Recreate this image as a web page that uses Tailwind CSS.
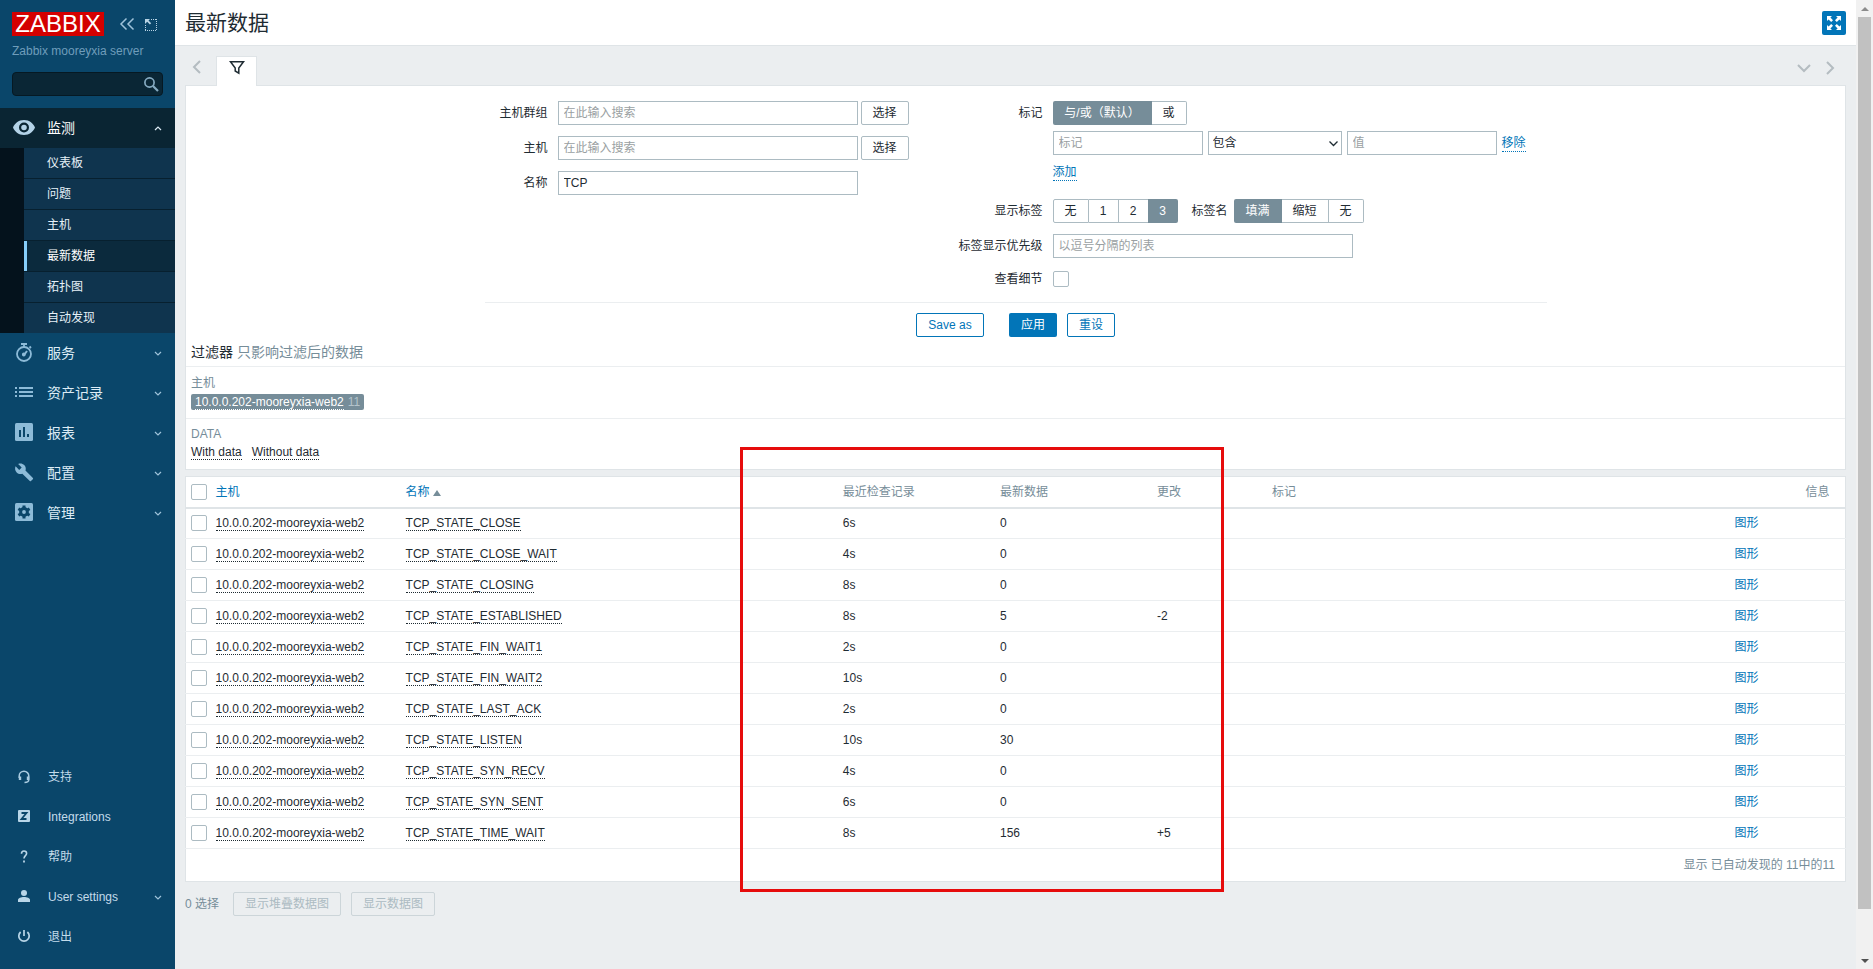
<!DOCTYPE html>
<html lang="zh-CN">
<head>
<meta charset="utf-8">
<title>最新数据</title>
<script src="https://cdn.jsdelivr.net/npm/@tailwindcss/browser@4"></script>
</head>
<body class="flex h-screen overflow-hidden bg-[#ebeef0] font-['Liberation_Sans','Noto_Sans_CJK_SC',sans-serif] text-xs text-[#1f2c33]">

<!-- Sidebar -->
<aside class="flex w-[175px] shrink-0 flex-col bg-[#0a466a] text-[#dcebf5]">
  <div class="px-3 pt-3">
    <div class="flex h-6 items-center">
      <a href="#" class="flex h-6 w-[92px] items-center justify-center bg-[#d40000] text-2xl leading-6 text-white">ZABBIX</a>
      <button aria-label="收起" class="ml-[15px]"><svg class="size-4" viewBox="0 0 16 16" fill="none" stroke="#9fc3da" stroke-width="1.500"><path d="M7.500 2.500 2 8l5.500 5.500M14.500 2.500 9 8l5.500 5.500"/></svg></button>
      <button aria-label="隐藏" class="ml-2"><svg class="size-[15px]" viewBox="0 0 15 15" fill="none" stroke="#b8d3e4"><path stroke-dasharray="1 1" d="M8 2.500H13.500M13.500 2V13.500M2 13.500H14M2.500 8V14"/><path fill="#b8d3e4" stroke="none" d="M2 2h5L5.500 3.500l2.700 2.700-1.300 1.300L4.200 4.800 2 7z"/></svg></button>
    </div>
    <div class="mt-[7px] h-4 leading-4 text-[#6f9dbb]">Zabbix mooreyxia server</div>
    <div class="mt-[13px] flex h-6 items-center rounded-sm border border-[#061923] bg-[#0a2635] pr-[3px]">
      <input type="search" aria-label="搜索" class="h-full min-w-0 flex-1 bg-transparent px-1 outline-none">
      <button aria-label="搜索"><svg class="size-4" viewBox="0 0 16 16" fill="none" stroke="#85aac1" stroke-width="1.700"><circle cx="6.500" cy="6.500" r="4.600"/><path d="M10 10l5 5" stroke-width="2.200"/></svg></button>
    </div>
  </div>

  <nav class="mt-3 text-sm">
    <a href="#" class="flex h-10 items-center bg-[#0a2533] pr-3 pl-3 text-white">
      <svg class="h-6 w-6" viewBox="0 0 24 24" fill="#b4d3e8"><path d="M12 4C6.500 4 2.500 7.600 1 11.500 2.500 15.400 6.500 19 12 19s9.500-3.600 11-7.500C21.500 7.600 17.500 4 12 4zm0 12.500a5 5 0 1 1 0-10 5 5 0 0 1 0 10zm0-2.200a2.800 2.800 0 1 0 0-5.600 2.800 2.800 0 0 0 0 5.600z"/></svg>
      <span class="ml-[11px] flex-1">监测</span>
      <svg class="mr-px size-2" viewBox="0 0 8 8" fill="none" stroke="#dcebf5" stroke-width="1.200"><path d="M1 6l3-3 3 3"/></svg>
    </a>
    <div class="bg-[#04121c] pl-6 text-xs">
      <ul class="bg-[#0f344e] text-[#e6f1f8]">
        <li class="h-[31px] border-b border-[#07202f]"><a href="#" class="block pl-[23px] leading-[30px]">仪表板</a></li>
        <li class="h-[31px] border-b border-[#07202f]"><a href="#" class="block pl-[23px] leading-[30px]">问题</a></li>
        <li class="h-[31px] border-b border-[#07202f]"><a href="#" class="block pl-[23px] leading-[30px]">主机</a></li>
        <li class="h-[31px] border-b border-[#07202f]"><a href="#" class="block border-l-3 border-[#86cdf9] bg-[#0b2a3d] pl-5 leading-[30px] text-white">最新数据</a></li>
        <li class="h-[31px] border-b border-[#07202f]"><a href="#" class="block pl-[23px] leading-[30px]">拓扑图</a></li>
        <li class="h-[30px]"><a href="#" class="block pl-[23px] leading-[30px]">自动发现</a></li>
      </ul>
    </div>
    <a href="#" class="flex h-10 items-center px-3">
      <svg class="h-6 w-6" viewBox="0 0 24 24" fill="none" stroke="#8dbbd8" stroke-width="1.800"><circle cx="12" cy="13" r="7"/><path d="M9 3h6M12 3.500v2.500M17.500 5.500l1.500 1.500"/><path d="M12 14l3-4" stroke-width="2"/><circle cx="11.800" cy="13.500" r="1" fill="#8dbbd8"/></svg>
      <span class="ml-[11px] flex-1">服务</span>
      <svg class="mr-px size-2" viewBox="0 0 8 8" fill="none" stroke="#9fc3da" stroke-width="1.200"><path d="M1 3l3 3 3-3"/></svg>
    </a>
    <a href="#" class="flex h-10 items-center px-3">
      <svg class="h-6 w-6" viewBox="0 0 24 24" fill="#8dbbd8"><path d="M3 6h2v2H3zM3 10h2v2H3zM3 14h2v2H3zM7 6h14v2H7zM7 10h14v2H7zM7 14h14v2H7z"/></svg>
      <span class="ml-[11px] flex-1">资产记录</span>
      <svg class="mr-px size-2" viewBox="0 0 8 8" fill="none" stroke="#9fc3da" stroke-width="1.200"><path d="M1 3l3 3 3-3"/></svg>
    </a>
    <a href="#" class="flex h-10 items-center px-3">
      <svg class="h-6 w-6" viewBox="0 0 24 24"><rect x="3" y="2" width="18" height="18" rx="1.500" fill="#8dbbd8"/><path d="M8 9v7M12 6v10M16 13v3" stroke="#0a466a" stroke-width="2"/></svg>
      <span class="ml-[11px] flex-1">报表</span>
      <svg class="mr-px size-2" viewBox="0 0 8 8" fill="none" stroke="#9fc3da" stroke-width="1.200"><path d="M1 3l3 3 3-3"/></svg>
    </a>
    <a href="#" class="flex h-10 items-center px-3">
      <svg class="h-6 w-6" viewBox="0 0 24 24" fill="#8dbbd8"><path transform="translate(2.300 1.500) scale(.82)" d="M22.700 19l-9.100-9.100c.9-2.300.4-5-1.500-6.900-2-2-5-2.400-7.400-1.300L9 6 6 9 1.600 4.700C.4 7.100.9 10.100 2.900 12.100c1.900 1.900 4.600 2.400 6.900 1.500l9.100 9.100c.4.4 1 .4 1.400 0l2.300-2.300c.5-.4.5-1.100.1-1.400z"/></svg>
      <span class="ml-[11px] flex-1">配置</span>
      <svg class="mr-px size-2" viewBox="0 0 8 8" fill="none" stroke="#9fc3da" stroke-width="1.200"><path d="M1 3l3 3 3-3"/></svg>
    </a>
    <a href="#" class="flex h-10 items-center px-3">
      <svg class="h-6 w-6" viewBox="0 0 24 24"><rect x="3" y="2" width="18" height="18" rx="1.500" fill="#8dbbd8"/><g transform="translate(0 -1)"><circle cx="12" cy="12" r="3.400" fill="none" stroke="#0a466a" stroke-width="3"/><path d="M12 5.500v2.500M12 16v2.500M6.400 8.700l2.200 1.300M15.400 14l2.200 1.300M6.400 15.300 8.600 14M15.400 10l2.200-1.300" stroke="#0a466a" stroke-width="3"/></g></svg>
      <span class="ml-[11px] flex-1">管理</span>
      <svg class="mr-px size-2" viewBox="0 0 8 8" fill="none" stroke="#9fc3da" stroke-width="1.200"><path d="M1 3l3 3 3-3"/></svg>
    </a>
  </nav>

  <nav class="mt-auto pb-3 text-[#c3dbea]">
    <a href="#" class="flex h-10 items-center px-3">
      <svg class="ml-1 size-4" viewBox="0 0 16 16" fill="none" stroke="#a9cbe0" stroke-width="1.500"><path d="M3.200 9V7a4.800 4.800 0 0 1 9.600 0v3.500c0 1.800-1.500 3-4.300 3"/><path d="M4 7.500v3.500M12 7.500v3.500" stroke-width="2.400"/></svg>
      <span class="ml-4">支持</span>
    </a>
    <a href="#" class="flex h-10 items-center px-3">
      <svg class="ml-1 size-4" viewBox="0 0 16 16"><rect x="2" y="1" width="12" height="12" rx="1" fill="#b9d6e8"/><path d="M5.500 4h5l-5 6h5" fill="none" stroke="#0a466a" stroke-width="1.800"/></svg>
      <span class="ml-4">Integrations</span>
    </a>
    <a href="#" class="flex h-10 items-center px-3">
      <svg class="ml-1 size-4" viewBox="0 0 16 16" fill="none" stroke="#b9d6e8" stroke-width="1.600"><path d="M5.500 4.700C5.500 2.800 6.500 2 8 2s2.600.9 2.600 2.400C10.600 6.500 8 6.800 8 9.500"/><path d="M8 11.500v2" stroke-width="1.800"/></svg>
      <span class="ml-4">帮助</span>
    </a>
    <a href="#" class="flex h-10 items-center px-3">
      <svg class="ml-1 size-4" viewBox="0 0 16 16" fill="#b9d6e8"><circle cx="8" cy="4" r="3"/><path d="M2 13v-2c0-2 3-3 6-3s6 1 6 3v2z"/></svg>
      <span class="ml-4 flex-1">User settings</span>
      <svg class="mr-px size-2" viewBox="0 0 8 8" fill="none" stroke="#9fc3da" stroke-width="1.200"><path d="M1 3l3 3 3-3"/></svg>
    </a>
    <a href="#" class="flex h-10 items-center px-3">
      <svg class="ml-1 size-4" viewBox="0 0 16 16" fill="none" stroke="#b9d6e8" stroke-width="1.700"><path d="M4.600 3a5.200 5.200 0 1 0 6.800 0M8 1v6"/></svg>
      <span class="ml-4">退出</span>
    </a>
  </nav>
</aside>

<!-- Page -->
<div class="relative min-w-0 flex-1">
  <header class="flex h-[46px] items-center justify-between border-b border-[#dfe4e7] bg-white px-[10px]">
    <h1 class="text-[21px] leading-6">最新数据</h1>
    <button aria-label="全屏" class="flex size-6 items-center justify-center rounded-xs bg-[#0275b8]">
      <svg class="size-4" viewBox="0 0 16 16" fill="#fff"><path d="M1 1h5L4.400 2.600 7 5.200 5.200 7 2.600 4.400 1 6z"/><path d="M15 1v5l-1.600-1.600L10.800 7 9 5.200l2.600-2.600L10 1zM1 15v-5l1.600 1.600L5.200 9 7 10.800l-2.600 2.600L6 15zM15 15h-5l1.600-1.600L9 10.800 10.800 9l2.600 2.600L15 10z"/></svg>
    </button>
  </header>

  <main class="px-[10px] pt-[10px]">
    <div class="flex h-[29px] items-start pr-2">
      <button aria-label="上一个" class="mt-1 ml-[5px] w-[26px]"><svg class="size-[14px]" viewBox="0 0 14 14" fill="none" stroke="#b4bcc1" stroke-width="2"><path d="M10 1 4 7l6 6"/></svg></button>
      <button aria-label="过滤器" class="relative z-10 flex h-[30px] w-[41px] items-start justify-center border border-b-0 border-[#dfe4e7] bg-white pt-[3px]"><svg class="size-4" viewBox="0 0 16 16" fill="none" stroke="#1f2c33" stroke-width="1.500"><path d="M1.500 1.800h13L9.800 8v5.200L6.200 11V8z"/></svg></button>
      <button aria-label="展开" class="mt-[5px] ml-auto"><svg class="size-[14px]" viewBox="0 0 14 14" fill="none" stroke="#b4bcc1" stroke-width="2"><path d="M1 4l6 6 6-6"/></svg></button>
      <button aria-label="下一个" class="mt-[5px] ml-[13px]"><svg class="size-[14px]" viewBox="0 0 14 14" fill="none" stroke="#b4bcc1" stroke-width="2"><path d="M3 1l6 6-6 6"/></svg></button>
    </div>

    <section class="border border-[#dfe4e7] bg-white">
      <form class="mx-auto max-w-[1062px] pt-[15px]" onsubmit="return false">
        <div class="flex">
          <div class="flex w-[473px] flex-col gap-[11px]">
            <div class="flex h-6 items-center">
              <label for="groups" class="w-[63px] text-right">主机群组</label>
              <input id="groups" placeholder="在此输入搜索" class="ml-[10px] h-6 w-[300px] border border-[#acbbc2] px-[5px] placeholder:text-[#9a9fa2]">
              <button class="ml-[3px] h-6 w-12 rounded-xs border border-[#acbbc2]">选择</button>
            </div>
            <div class="flex h-6 items-center">
              <label for="hosts" class="w-[63px] text-right">主机</label>
              <input id="hosts" placeholder="在此输入搜索" class="ml-[10px] h-6 w-[300px] border border-[#acbbc2] px-[5px] placeholder:text-[#9a9fa2]">
              <button class="ml-[3px] h-6 w-12 rounded-xs border border-[#acbbc2]">选择</button>
            </div>
            <div class="flex h-6 items-center">
              <label for="name" class="w-[63px] text-right">名称</label>
              <input id="name" value="TCP" class="ml-[10px] h-6 w-[300px] border border-[#acbbc2] px-[5px]">
            </div>
          </div>

          <div class="grid flex-1 grid-cols-[85px_1fr] gap-x-[10px]">
            <span class="text-right leading-6">标记</span>
            <div>
              <div class="flex h-6">
                <button class="w-[99px] rounded-l-xs bg-[#768d99] text-white">与/或（默认）</button>
                <button class="w-[35px] rounded-r-xs border border-l-0 border-[#acbbc2]">或</button>
              </div>
              <div class="mt-[6px] flex h-6 items-center gap-[5px]">
                <input aria-label="标记" placeholder="标记" class="h-6 w-[150px] border border-[#acbbc2] px-[5px] placeholder:text-[#9a9fa2]">
                <div class="relative">
                  <select aria-label="运算符" class="block h-6 w-[134px] appearance-none border border-[#acbbc2] bg-white px-1"><option>包含</option></select>
                  <svg class="pointer-events-none absolute top-2 right-1 size-[9px]" viewBox="0 0 9 9" fill="none" stroke="#1f2c33" stroke-width="1.300"><path d="M.5 2.500l4 4 4-4"/></svg>
                </div>
                <input aria-label="值" placeholder="值" class="h-6 w-[150px] border border-[#acbbc2] px-[5px] placeholder:text-[#9a9fa2]">
                <a href="#" class="border-b border-dotted border-[#0275b8] leading-4 text-[#0275b8]">移除</a>
              </div>
              <div class="mt-[9px] h-4"><a href="#" class="inline-block border-b border-dotted border-[#0275b8] leading-4 text-[#0275b8]">添加</a></div>
            </div>

            <span class="mt-[19px] text-right leading-6">显示标签</span>
            <div class="mt-[19px] flex h-6 items-center">
              <div class="flex h-6">
                <button class="w-9 rounded-l-xs border border-[#acbbc2]">无</button>
                <button class="w-[30px] border border-l-0 border-[#acbbc2]">1</button>
                <button class="w-[29px] border-y border-[#acbbc2]">2</button>
                <button class="w-[30px] rounded-r-xs bg-[#768d99] text-white">3</button>
              </div>
              <span class="ml-[14px]">标签名</span>
              <div class="ml-[6px] flex h-6">
                <button class="w-12 rounded-l-xs bg-[#768d99] text-white">填满</button>
                <button class="w-[47px] border border-l-0 border-[#acbbc2]">缩短</button>
                <button class="w-[35px] rounded-r-xs border border-l-0 border-[#acbbc2]">无</button>
              </div>
            </div>

            <label for="prio" class="mt-[11px] text-right leading-6">标签显示优先级</label>
            <input id="prio" placeholder="以逗号分隔的列表" class="mt-[11px] h-6 w-[300px] border border-[#acbbc2] px-[5px] placeholder:text-[#9a9fa2]">

            <label for="details" class="mt-[9px] text-right leading-6">查看细节</label>
            <input id="details" type="checkbox" class="mt-[13px] size-4 appearance-none rounded-xs border border-[#acbbc2] bg-white">
          </div>
        </div>
        <div class="mt-[11px] flex justify-center border-t border-[#ebeef0] pt-[10px]">
          <button class="h-6 w-[68px] rounded-xs border border-[#0275b8] text-[#0275b8]">Save as</button>
          <button class="ml-[25px] h-6 w-12 rounded-xs bg-[#0275b8] text-white">应用</button>
          <button class="ml-[10px] h-6 w-12 rounded-xs border border-[#0275b8] text-[#0275b8]">重设</button>
        </div>
      </form>

      <h4 class="mt-[5px] border-b border-[#ebeef0] px-[5px] pb-1 text-sm leading-5">过滤器 <span class="text-[#768d99]">只影响过滤后的数据</span></h4>
      <div class="border-b border-[#ebeef0] px-[5px] pt-2 pb-2">
        <h3 class="leading-4 text-[#768d99]">主机</h3>
        <div class="mt-[3px] inline-flex h-4 items-center gap-1 rounded-xs bg-[#768d99] px-1 align-top leading-[14px] text-white"><a href="#" class="border-b border-dotted border-white">10.0.0.202-mooreyxia-web2</a><span class="text-[#b4c3cb]">11</span></div>
      </div>
      <div class="px-[5px] pt-[7px] pb-[9px]">
        <h3 class="leading-4 text-[#768d99]">DATA</h3>
        <div class="mt-[3px] flex gap-[10px] leading-[14px]"><a href="#" class="border-b border-dotted border-[#1f2c33]">With data</a><a href="#" class="border-b border-dotted border-[#1f2c33]">Without data</a></div>
      </div>
    </section>

    <form class="mt-[6px]" onsubmit="return false">
      <table class="w-full table-fixed border border-[#dfe4e7] bg-white text-left leading-[14px]">
        <colgroup><col class="w-[25px]"><col class="w-[190px]"><col class="w-[437px]"><col class="w-[157px]"><col class="w-[157px]"><col class="w-[115px]"><col class="w-[462px]"><col class="w-[71px]"><col class="w-[45px]"></colgroup>
        <thead>
          <tr class="h-[31px] border-b-2 border-[#dfe4e7] text-[#768d99] [&>th]:pl-[5px] [&>th]:font-normal">
            <th><input type="checkbox" aria-label="全选" class="block size-4 appearance-none rounded-xs border border-[#acbbc2] bg-white"></th>
            <th><a href="#" class="text-[#0275b8]">主机</a></th>
            <th><a href="#" class="text-[#0275b8]">名称 <span class="inline-block border-x-4 border-b-6 border-x-transparent border-b-[#768d99]"></span></a></th>
            <th>最近检查记录</th><th>最新数据</th><th>更改</th><th>标记</th><th></th><th>信息</th>
          </tr>
        </thead>
        <tbody id="rows"></tbody>
        <tfoot><tr class="h-[33px] text-[#768d99]"><td colspan="9" class="pr-[10px] text-right">显示 已自动发现的 11中的11</td></tr></tfoot>
      </table>
      <div class="mt-[10px] flex h-6 items-center text-[#768d99]">
        <span>0 选择</span>
        <button disabled class="ml-[14px] h-6 rounded-xs border border-[#ccd5d9] px-[11px] text-[#acbbc2]">显示堆叠数据图</button>
        <button disabled class="ml-[10px] h-6 rounded-xs border border-[#ccd5d9] px-[11px] text-[#acbbc2]">显示数据图</button>
      </div>
    </form>
  </main>

  <!-- Highlight frame over the value columns -->
  <div class="pointer-events-none absolute top-[447px] left-[565px] h-[445px] w-[484px] border-3 border-[#e60c0c]"></div>
</div>

<!-- Scrollbar -->
<div class="flex w-[17px] shrink-0 flex-col items-center bg-[#f1f1f1]" aria-hidden="true">
  <div class="flex h-[17px] items-center"><svg class="h-1 w-2" viewBox="0 0 8 4" fill="#8b8b8b"><path d="M0 4l4-4 4 4z"/></svg></div>
  <div class="w-[13px] grow-[892] bg-[#c1c1c1]"></div>
  <div class="grow-[43]"></div>
  <div class="flex h-[17px] items-center"><svg class="h-1 w-2" viewBox="0 0 8 4" fill="#505050"><path d="M0 0l4 4 4-4z"/></svg></div>
</div>

<script>
const items = [
  ['CLOSE', '6s', '0', ''], ['CLOSE_WAIT', '4s', '0', ''], ['CLOSING', '8s', '0', ''],
  ['ESTABLISHED', '8s', '5', '-2'], ['FIN_WAIT1', '2s', '0', ''], ['FIN_WAIT2', '10s', '0', ''],
  ['LAST_ACK', '2s', '0', ''], ['LISTEN', '10s', '30', ''], ['SYN_RECV', '4s', '0', ''],
  ['SYN_SENT', '6s', '0', ''], ['TIME_WAIT', '8s', '156', '+5']
];
document.getElementById('rows').innerHTML = items.map(([n, t, v, c]) => `
<tr class="h-[31px] border-b border-[#ebeef0] [&>td]:pl-[5px]">
  <td><input type="checkbox" aria-label="TCP_STATE_${n}" class="block size-4 appearance-none rounded-xs border border-[#acbbc2] bg-white"></td>
  <td><a href="#" class="inline-block border-b border-dotted border-[#1f2c33] align-top">10.0.0.202-mooreyxia-web2</a></td>
  <td><a href="#" class="inline-block border-b border-dotted border-[#1f2c33] align-top">TCP_STATE_${n}</a></td>
  <td>${t}</td><td>${v}</td><td>${c}</td><td></td>
  <td><a href="#" class="text-[#0275b8]">图形</a></td><td></td>
</tr>`).join('');
</script>
</body>
</html>
